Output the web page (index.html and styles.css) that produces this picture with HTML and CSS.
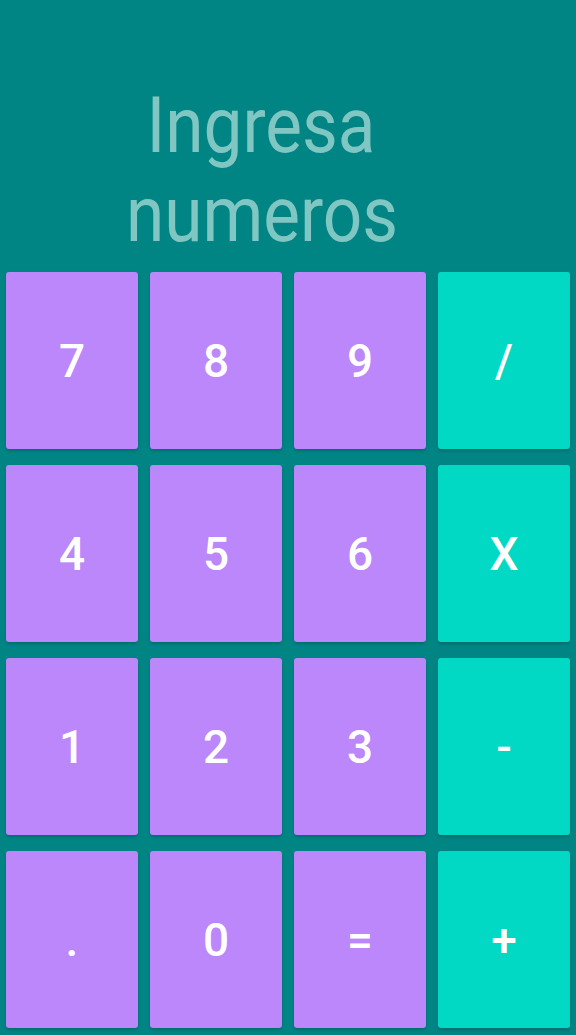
FILE: index.html
```html
<!DOCTYPE html>
<html lang="es">
<head>
<meta charset="utf-8">
<link rel="stylesheet" href="styles.css">
</head>
<body>
<div class="app">
  <div class="display"><span class="title">Ingresa numeros</span></div>
  <div class="pad">
    <button class="key num">7</button>
    <button class="key num">8</button>
    <button class="key num">9</button>
    <button class="key op">/</button>
    <button class="key num">4</button>
    <button class="key num">5</button>
    <button class="key num">6</button>
    <button class="key op">X</button>
    <button class="key num">1</button>
    <button class="key num">2</button>
    <button class="key num">3</button>
    <button class="key op">-</button>
    <button class="key num">.</button>
    <button class="key num">0</button>
    <button class="key num">=</button>
    <button class="key op">+</button>
  </div>
</div>
</body>
</html>
```
FILE: styles.css
```css
html, body {
  margin: 0;
  padding: 0;
  background: #018584;
}
.app {
  width: 576px;
  height: 1035px;
  display: flex;
  flex-direction: column;
  font-family: Roboto, "Noto Sans", sans-serif;
}
.display {
  height: 272px;
  box-sizing: border-box;
  padding: 82px 54px 0 0;
  text-align: center;
}
.title {
  display: inline-block;
  width: 300px;
  font-size: 77px;
  line-height: 89px;
  font-weight: 400;
  color: #80c6c2;
  transform: scaleX(0.9);
}
.pad {
  display: grid;
  grid-template-columns: repeat(4, 132px);
  grid-template-rows: repeat(4, 177px);
  column-gap: 12px;
  row-gap: 16px;
  padding: 0 6px;
}
.key {
  border: none;
  border-radius: 3px;
  margin: 0;
  padding: 0;
  font-family: Roboto, "Noto Sans", sans-serif;
  font-size: 46px;
  font-weight: 500;
  color: #ffffff;
  box-shadow: 0 2px 3px rgba(0, 0, 0, 0.18);
}
.num {
  background: #bb87fb;
}
.op {
  background: #02d9c5;
}
```
